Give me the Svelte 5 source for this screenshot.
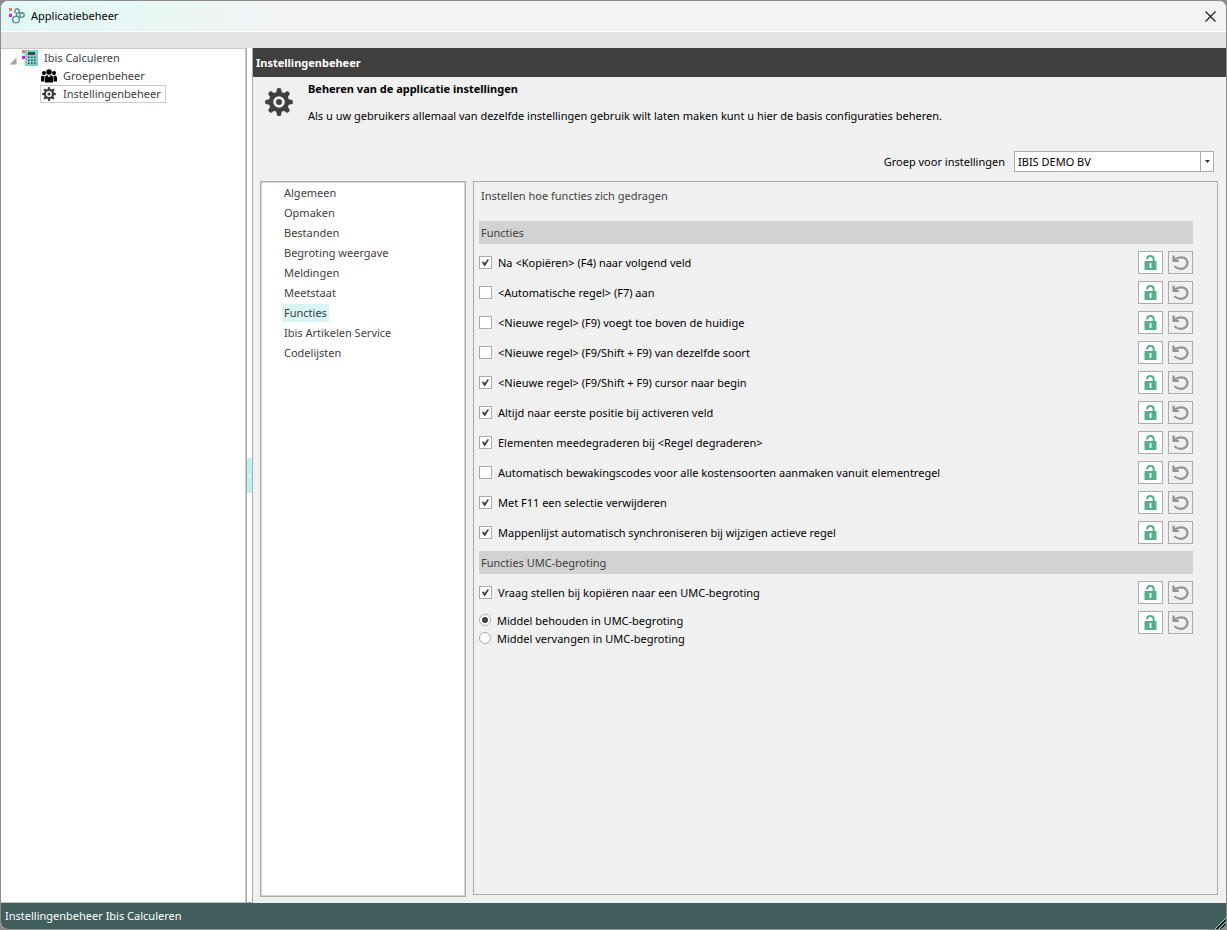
<script>
  const sections = [
    "Algemeen",
    "Opmaken",
    "Bestanden",
    "Begroting weergave",
    "Meldingen",
    "Meetstaat",
    "Functies",
    "Ibis Artikelen Service",
    "Codelijsten"
  ];
  let activeSection = $state("Functies");

  let functions = $state([
    { label: "Na <Kopiëren> (F4) naar volgend veld", checked: true },
    { label: "<Automatische regel> (F7) aan", checked: false },
    { label: "<Nieuwe regel> (F9) voegt toe boven de huidige", checked: false },
    { label: "<Nieuwe regel> (F9/Shift + F9) van dezelfde soort", checked: false },
    { label: "<Nieuwe regel> (F9/Shift + F9) cursor naar begin", checked: true },
    { label: "Altijd naar eerste positie bij activeren veld", checked: true },
    { label: "Elementen meedegraderen bij <Regel degraderen>", checked: true },
    {
      label: "Automatisch bewakingscodes voor alle kostensoorten aanmaken vanuit elementregel",
      checked: false
    },
    { label: "Met F11 een selectie verwijderen", checked: true },
    { label: "Mappenlijst automatisch synchroniseren bij wijzigen actieve regel", checked: true }
  ]);

  let umcFunctions = $state([
    { label: "Vraag stellen bij kopiëren naar een UMC-begroting", checked: true }
  ]);

  const umcModes = [
    { value: "keep", label: "Middel behouden in UMC-begroting" },
    { value: "replace", label: "Middel vervangen in UMC-begroting" }
  ];
  let umcMode = $state("keep");
</script>

{#snippet gear(size)}
  <svg width={size} height={size} viewBox="0 0 28 28" aria-hidden="true">
    <g fill="#404040">
      {#each [0, 45, 90, 135, 180, 225, 270, 315] as angle}
        <path d="M11 6 12 .6Q14 -.4 16 .6L17 6Z" transform="rotate({angle} 14 14)" />
      {/each}
    </g>
    <circle cx="14" cy="14" r="8" fill="none" stroke="#404040" stroke-width="4.4" />
    <circle cx="14" cy="14" r="3" fill="#404040" />
  </svg>
{/snippet}

{#snippet rowButtons()}
  <div class="rowButtons">
    <button type="button" class="lock" aria-label="Vergrendelen">
      <svg width="13" height="15" viewBox="0 0 13 15" aria-hidden="true">
        <path d="M3.2 4.6V3.8A3.2 2.8 0 0 1 9.6 3.8V7" fill="none" stroke="#55ae8c" stroke-width="2" />
        <rect x=".5" y="6" width="12" height="9" rx=".6" fill="#55ae8c" />
        <rect x="5.5" y="8" width="2" height="5" fill="#e4f5ee" />
      </svg>
    </button>
    <button type="button" aria-label="Herstellen">
      <svg width="17" height="15" viewBox="0 0 17 15" aria-hidden="true">
        <path d="M3 4.4C7 1.6 12.2 1.4 14.6 5C16.8 9 14.4 13.4 9.4 13.8Q5.4 14 2.4 11.2" fill="none" stroke="#959595" stroke-width="2.2" />
        <path d="M.4 .4V7H7V5.2L3.6 4.6 2.4 .4Z" fill="#959595" />
      </svg>
    </button>
  </div>
{/snippet}

{#snippet checkRow(item)}
  <div class="row">
    <label class="option">
      <input type="checkbox" bind:checked={item.checked} />
      <span>{item.label}</span>
    </label>
    {@render rowButtons()}
  </div>
{/snippet}

<div class="window">
  <header class="titleBar">
    <svg width="16" height="16" viewBox="0 0 16 16" aria-hidden="true">
      <rect width="3" height="3" fill="#f07868" />
      <rect width="3" height="3" y="3" fill="#bfe9f5" />
      <rect width="3" height="3" y="6" fill="#e815f0" />
      <g fill="none" stroke="#5b9188" stroke-width="1.4">
        <circle cx="8" cy="3" r="2.2" />
        <circle cx="13" cy="7" r="2.2" />
        <circle cx="7" cy="11.6" r="3.3" />
        <path d="M10 3.6 11.6 5.2M9.8 10 11.4 8.4M7.8 5V8.4" />
      </g>
    </svg>
    <h1>Applicatiebeheer</h1>
    <button type="button" class="close" aria-label="Sluiten">
      <svg width="11" height="11" viewBox="0 0 11 11" aria-hidden="true">
        <path d="M.5 .5 10.5 10.5M10.5 .5 .5 10.5" stroke="#1a1a1a" stroke-width="1.2" />
      </svg>
    </button>
  </header>
  <div class="toolStrip"></div>

  <div class="body">
    <nav class="tree" aria-label="Applicaties">
      <a class="node root" href="#calculeren">
        <svg width="8" height="8" viewBox="0 0 8 8" aria-hidden="true">
          <path d="M7.5 .5V7.5H.5Z" fill="#a6a6a6" />
        </svg>
        <svg width="16" height="16" viewBox="0 0 16 16" aria-hidden="true">
          <rect width="3" height="3" fill="#f07868" />
          <rect y="3" width="3" height="3" fill="#bfe9f5" />
          <rect y="6" width="3" height="3" fill="#e815f0" />
          <rect x="3" width="13" height="16" fill="#7fd0cb" />
          <rect x="6" y="2" width="7" height="3" fill="#404848" />
          {#each [7, 10, 13] as y}
            {#each [6, 9, 12] as x}
              <rect {x} y={y - 0.5} width="1.6" height="1.6" fill="#4a5c5c" />
            {/each}
          {/each}
        </svg>
        <span>Ibis Calculeren</span>
      </a>
      <a class="node" href="#groepen">
        <svg width="16" height="14" viewBox="0 0 16 14" aria-hidden="true">
          <circle cx="8" cy="3" r="2.8" />
          <circle cx="3" cy="4" r="2" />
          <circle cx="13" cy="4" r="2" />
          <path d="M4 13.5V8.6Q4.2 6.4 6.2 6L8 8.6 9.8 6Q11.8 6.4 12 8.6V13.5Z" />
          <path d="M0 12.5V8.4Q.2 6.6 2 6.4L3 7.6 4.4 6.4Q3.5 7.2 3.5 8.6V12.5Z" />
          <path d="M16 12.5V8.4Q15.8 6.6 14 6.4L13 7.6 11.6 6.4Q12.5 7.2 12.5 8.6V12.5Z" />
        </svg>
        <span>Groepenbeheer</span>
      </a>
      <a class="node selected" href="#instellingen" aria-current="page">
        {@render gear(14)}
        <span>Instellingenbeheer</span>
      </a>
    </nav>

    <div class="splitter">
      <button type="button" aria-label="Boom inklappen">
        <svg width="3" height="5" viewBox="0 0 3 5" aria-hidden="true">
          <path d="M3 0V5L0 2.5Z" fill="#fff" />
        </svg>
      </button>
    </div>

    <main>
      <h2 class="caption">Instellingenbeheer</h2>
      <div class="intro">
        {@render gear(28)}
        <div>
          <h3>Beheren van de applicatie instellingen</h3>
          <p>Als u uw gebruikers allemaal van dezelfde instellingen gebruik wilt laten maken kunt u hier de basis configuraties beheren.</p>
        </div>
      </div>

      <div class="groupPicker">
        <label for="group">Groep voor instellingen</label>
        <div class="combo">
          <select id="group">
            <option>IBIS DEMO BV</option>
          </select>
          <span class="comboArrow">
            <svg width="5" height="3" viewBox="0 0 5 3" aria-hidden="true">
              <path d="M0 0H5L2.5 3Z" fill="#333" />
            </svg>
          </span>
        </div>
      </div>

      <div class="panels">
        <ul class="sections">
          {#each sections as section}
            <li>
              <button
                type="button"
                class:active={section === activeSection}
                onclick={() => (activeSection = section)}
              >{section}</button>
            </li>
          {/each}
        </ul>

        <form class="settings">
          <p class="hint">Instellen hoe functies zich gedragen</p>

          <h4>Functies</h4>
          {#each functions as item}
            {@render checkRow(item)}
          {/each}

          <h4>Functies UMC-begroting</h4>
          {#each umcFunctions as item}
            {@render checkRow(item)}
          {/each}
          <div class="row radioRow">
            <div>
              {#each umcModes as mode}
                <label class="option">
                  <input type="radio" name="umcMode" value={mode.value} bind:group={umcMode} />
                  <span>{mode.label}</span>
                </label>
              {/each}
            </div>
            {@render rowButtons()}
          </div>
        </form>
      </div>
    </main>
  </div>

  <footer>
    <span>Instellingenbeheer Ibis Calculeren</span>
    <svg width="11" height="11" viewBox="0 0 11 11" aria-hidden="true">
      <path d="M0 11 11 0M4 11 11 4M8 11 11 8" stroke="#a9cfc9" />
      <path d="M1 11 11 1M2 11 11 2M5 11 11 5M6 11 11 6M9 11 11 9" stroke="#0c1a18" />
    </svg>
  </footer>
</div>

<style>
  :global(body) {
    background: #8c8c8c;
  }
  .window {
    box-sizing: border-box;
    display: flex;
    flex-direction: column;
    height: 100vh;
    border: 1px solid #8c8c8c;
    border-radius: 8px;
    overflow: hidden;
    background: #f0f0f0;
    color: #000;
    font: 11px/18px "Noto Sans", "Open Sans", sans-serif;
  }
  h1,
  h2,
  h3,
  h4,
  p,
  ul {
    margin: 0;
    padding: 0;
    font-size: 11px;
    font-weight: 400;
    list-style: none;
  }
  button,
  select {
    margin: 0;
    padding: 0;
    border: 0;
    background: none;
    color: inherit;
    font: inherit;
  }
  svg {
    display: block;
    flex: none;
  }

  .titleBar {
    display: flex;
    align-items: center;
    gap: 6px;
    height: 30px;
    padding: 0 10px 0 8px;
    border-bottom: 1px solid #fff;
    background: linear-gradient(90deg, #e3f8f6 0, #e6f7f5 120px, #f3f3f3 300px);
  }
  .close {
    margin-left: auto;
  }
  .toolStrip {
    height: 16px;
    background: #e4e4e4;
  }

  .body {
    display: flex;
    flex: 1;
    min-height: 0;
  }
  .tree {
    box-sizing: border-box;
    flex: none;
    width: 20%;
    border: 1px solid #c8c8c8;
    border-left: 0;
    background: #fff;
    color: #404040;
  }
  .node {
    display: flex;
    align-items: center;
    gap: 6px;
    box-sizing: border-box;
    width: max-content;
    height: 18px;
    margin-left: 39px;
    padding: 0 4px 0 1px;
    color: inherit;
    line-height: 20px;
    text-decoration: none;
  }
  .root {
    margin-left: 8px;
    padding: 0;
  }
  .root svg:first-child {
    align-self: flex-end;
    margin: 0 -1px 2px 0;
  }
  .selected {
    gap: 7px;
    border: 1px solid #ccc;
  }
  .splitter {
    display: flex;
    align-items: center;
    flex: none;
    width: 5px;
    border: 1px solid #ababab;
    border-top-width: 0;
    background: #fff;
  }
  .splitter button {
    display: grid;
    place-items: center;
    width: 100%;
    height: 35px;
    background: #b8f4ee;
  }

  main {
    display: flex;
    flex: 1;
    flex-direction: column;
    min-width: 0;
  }
  .caption {
    padding: 0 3px;
    background: #404040;
    color: #fff;
    font-weight: 700;
    line-height: 29px;
  }
  .intro {
    display: flex;
    gap: 15px;
    padding: 3px 12px 0;
  }
  .intro > :global(svg) {
    margin-top: 8px;
  }
  h3 {
    margin-bottom: 9px;
    font-weight: 700;
  }
  .groupPicker {
    display: flex;
    align-items: center;
    justify-content: flex-end;
    gap: 9px;
    padding: 26px 12px 9px;
  }
  .combo {
    display: flex;
    box-sizing: border-box;
    width: 200px;
    height: 21px;
    border: 1px solid #ababab;
    background: #fff;
  }
  select {
    flex: 1;
    min-width: 0;
    padding-left: 3px;
    appearance: none;
    outline: none;
  }
  .comboArrow {
    display: grid;
    place-items: center;
    width: 12px;
    border-left: 1px solid #ababab;
    pointer-events: none;
  }

  .panels {
    display: flex;
    flex: 1;
    gap: 7px;
    min-height: 0;
    padding: 0 8px 6px 7px;
  }
  .sections {
    box-sizing: border-box;
    flex: none;
    width: 206px;
    padding: 1px 21px;
    border: 1px solid #ababab;
    box-shadow: inset 0 0 0 1px #d4d4d4;
    background: #fff;
  }
  .sections li {
    display: flex;
    align-items: center;
    height: 20px;
  }
  .sections button {
    padding: 0 2px;
    color: #404040;
  }
  .sections .active {
    background: #d8f5f3;
  }
  .settings {
    flex: 1;
    min-width: 0;
    margin-bottom: 2px;
    padding: 5px 24px 0 5px;
    border: 1px solid #ababab;
  }
  .hint {
    margin-bottom: 16px;
    padding-left: 2px;
  }
  .hint,
  h4 {
    color: #404040;
  }
  h4 {
    margin-block: 3px 4px;
    padding-left: 2px;
    background: #d2d2d2;
    line-height: 23px;
  }
  .row {
    display: flex;
    align-items: center;
    justify-content: space-between;
    height: 29px;
    padding-bottom: 1px;
  }
  .option {
    display: flex;
    align-items: center;
    gap: 6px;
    line-height: 19px;
  }
  .option input {
    display: grid;
    place-items: center;
    box-sizing: border-box;
    flex: none;
    width: 13px;
    height: 13px;
    margin: 0;
    border: 1px solid #ababab;
    background: #fff;
    appearance: none;
  }
  .option input:checked::before {
    width: 7px;
    height: 7px;
    background: #404040;
    content: "";
  }
  .option input[type="checkbox"]:checked::before {
    clip-path: polygon(0 45%, 18% 32%, 38% 58%, 82% 0, 100% 12%, 44% 100%, 32% 100%);
  }
  .option input[type="radio"] {
    width: 12px;
    height: 12px;
    border-radius: 50%;
  }
  .option input[type="radio"]:checked::before {
    width: 6px;
    height: 6px;
    border-radius: 50%;
  }
  .radioRow {
    align-items: flex-start;
    height: auto;
    padding-top: 3px;
  }
  .radioRow .option {
    height: 18px;
  }
  .rowButtons {
    display: flex;
    gap: 5px;
  }
  .rowButtons button {
    display: grid;
    place-items: center;
    box-sizing: border-box;
    width: 25px;
    height: 23px;
    border: 1px solid #ababab;
  }
  .rowButtons .lock {
    background: #fff;
  }

  footer {
    display: flex;
    align-items: center;
    justify-content: space-between;
    height: 26px;
    padding-left: 4px;
    background: #415e5c;
    color: #fff;
    line-height: 28px;
  }
  footer svg {
    align-self: flex-end;
  }
</style>
